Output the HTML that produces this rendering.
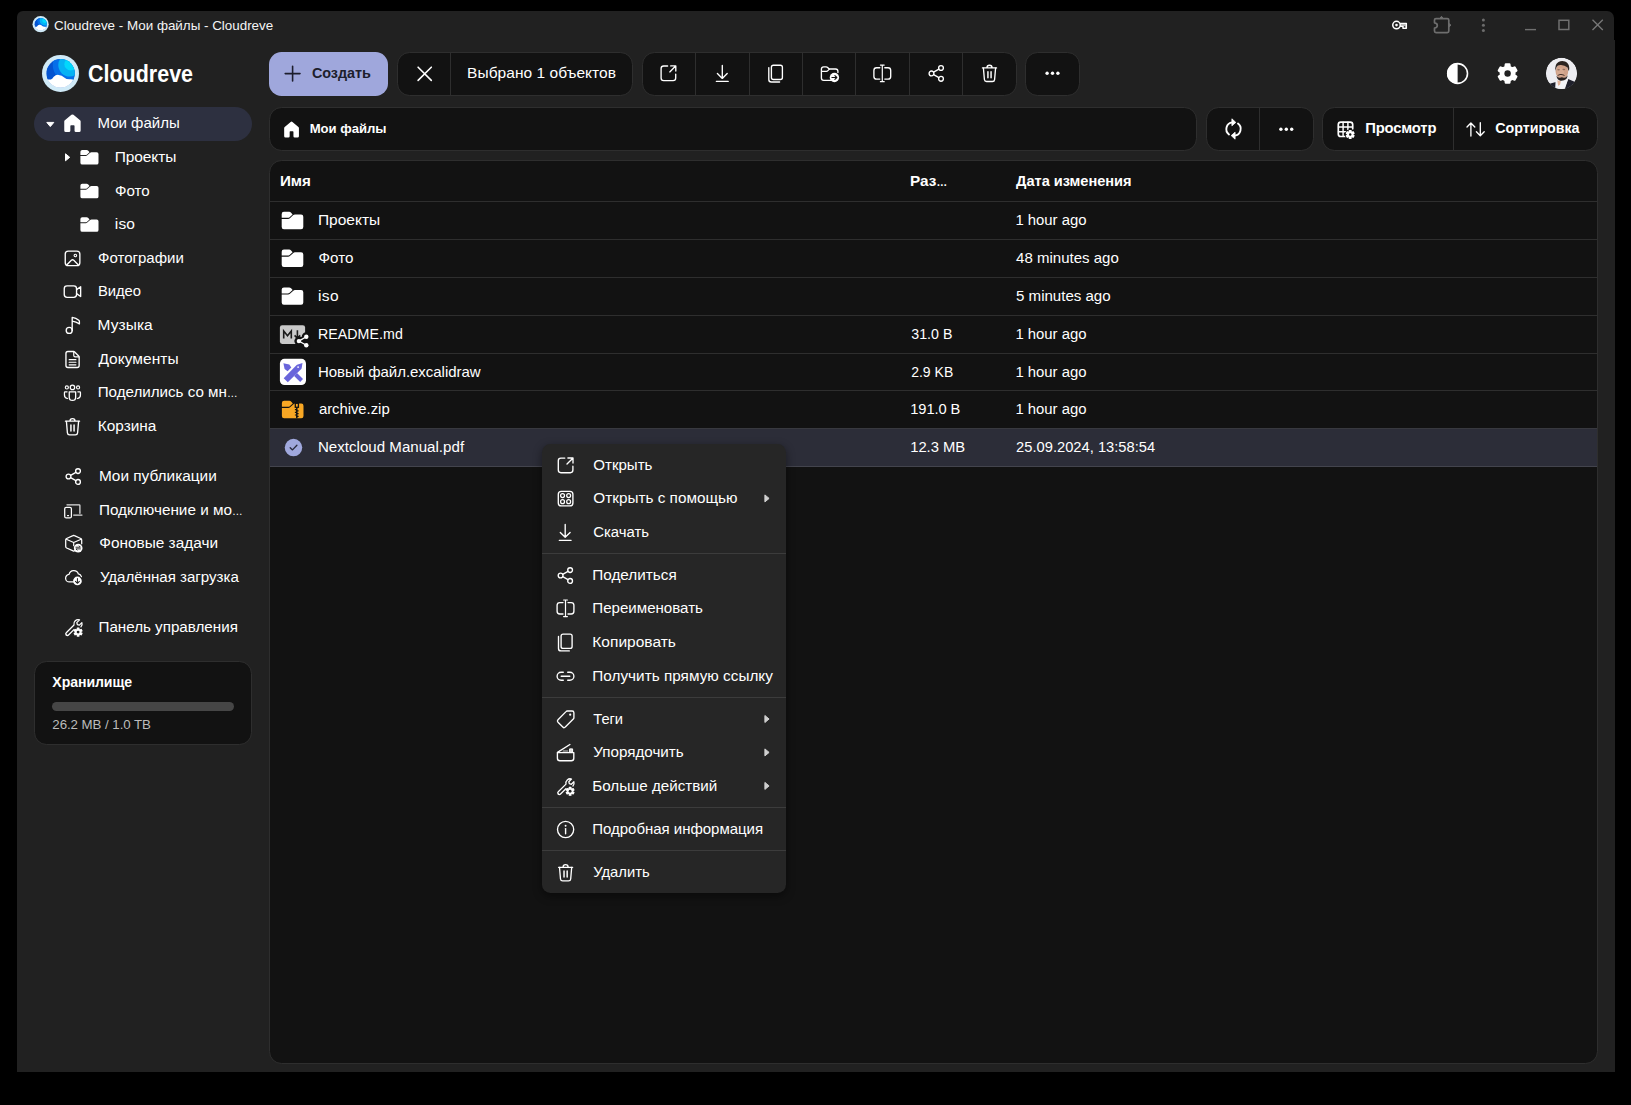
<!DOCTYPE html>
<html lang="ru">
<head>
<meta charset="utf-8">
<title>Cloudreve - Мои файлы - Cloudreve</title>
<style>
*{box-sizing:border-box;margin:0;padding:0}
html,body{width:1631px;height:1105px;background:#000;overflow:hidden}
body{font-family:"Liberation Sans",sans-serif;color:#fff;font-size:14.7px;position:relative}
.abs{position:absolute}
svg{display:block;overflow:visible}
#win{position:absolute;left:17px;top:40px;width:1598px;height:1032px;background:#212121}
#tbar{position:absolute;left:17px;top:10.5px;width:1597px;height:31px;background:#212121;border-radius:6px 7px 0 0}
.panel{position:absolute;background:#121212;border:1px solid #2e2e2e;border-radius:12.5px}
.vdiv{position:absolute;top:0;width:1px;height:100%;background:#2e2e2e}
.row{position:absolute;left:270px;width:1327px;height:1px;background:#2e2e2e}
.t{position:absolute;line-height:20px;white-space:nowrap}
.mdiv{position:absolute;left:542px;width:244px;height:1px;background:#3c3c3c}
</style>
</head>
<body>
<div id="tbar"></div>
<div id="win"></div>

<div id="sidebar">
<div class="abs" style="left:34px;top:107px;width:218px;height:34px;border-radius:17px;background:#2d3040"></div>
<div class="panel" style="left:34px;top:661px;width:218px;height:84px"></div>
<div class="abs" style="left:52px;top:702px;width:182px;height:9px;border-radius:4.5px;background:#464646"></div>
</div>

<div id="toolbar">
<div class="abs" style="left:269px;top:52px;width:119px;height:44px;border-radius:12.5px;background:#9fa7dc"></div>
<div class="panel" style="left:397px;top:52px;width:236px;height:44px"><div class="vdiv" style="left:52px"></div></div>
<div class="panel" style="left:642px;top:52px;width:375px;height:44px">
<div class="vdiv" style="left:52px"></div><div class="vdiv" style="left:106px"></div><div class="vdiv" style="left:159px"></div><div class="vdiv" style="left:212px"></div><div class="vdiv" style="left:266px"></div><div class="vdiv" style="left:319px"></div>
</div>
<div class="panel" style="left:1025px;top:52px;width:55px;height:44px"></div>
<div class="panel" style="left:269px;top:107px;width:928px;height:44px"></div>
<div class="panel" style="left:1206px;top:107px;width:108px;height:44px"><div class="vdiv" style="left:52px"></div></div>
<div class="panel" style="left:1322px;top:107px;width:276px;height:44px"><div class="vdiv" style="left:130px"></div></div>
</div>

<div id="table">
<div class="panel" style="left:269px;top:160px;width:1329px;height:903.5px"></div>
<div class="abs" style="left:270px;top:428px;width:1327px;height:38.5px;background:#2c2d38"></div>
<div class="row" style="top:201px"></div>
<div class="row" style="top:239.3px"></div>
<div class="row" style="top:277.1px"></div>
<div class="row" style="top:314.9px"></div>
<div class="row" style="top:352.7px"></div>
<div class="row" style="top:390px"></div>
<div class="row" style="top:428px;background:#38393f"></div>
<div class="row" style="top:466px;background:#43444d"></div>
</div>

<div id="menu">
<div class="abs" style="left:542px;top:444px;width:244px;height:449px;border-radius:8.5px;background:#262626;box-shadow:0 3px 10px rgba(0,0,0,.45)"></div>
<div class="mdiv" style="top:553px"></div>
<div class="mdiv" style="top:697px"></div>
<div class="mdiv" style="top:807px"></div>
<div class="mdiv" style="top:850px"></div>
</div>

<div id="texts">
<div class="t" style="left:88px;top:59.6px;font-size:23px;line-height:28px;font-weight:bold;transform-origin:0 50%;transform:scaleX(.934)">Cloudreve</div>
<div class="t" style="left:54px;top:16px;font-size:13.4px;color:#f4f4f4">Cloudreve - Мои файлы - Cloudreve</div>
<div class="t" style="left:97.6px;top:113px;font-size:15px;letter-spacing:-0.01px">Мои файлы</div>
<div class="t" style="left:114.8px;top:147px;font-size:15.5px;letter-spacing:-0.11px">Проекты</div>
<div class="t" style="left:115px;top:181px;font-size:15.1px;letter-spacing:-0.03px">Фото</div>
<div class="t" style="left:114.8px;top:214px;font-size:15.5px;letter-spacing:0.15px">iso</div>
<div class="t" style="left:98px;top:248px;font-size:15px;letter-spacing:0.01px">Фотографии</div>
<div class="t" style="left:97.9px;top:281px;font-size:14.8px;letter-spacing:-0.02px">Видео</div>
<div class="t" style="left:97.6px;top:315px;font-size:15.5px;letter-spacing:0.06px">Музыка</div>
<div class="t" style="left:98.4px;top:349px;font-size:15.5px;letter-spacing:0.04px">Документы</div>
<div class="t" style="left:97.7px;top:382px;font-size:15.2px;letter-spacing:-0.02px">Поделились со мн<span style="font-size:10.64px;letter-spacing:0">…</span></div>
<div class="t" style="left:97.7px;top:416px;font-size:15.4px;letter-spacing:0.02px">Корзина</div>
<div class="t" style="left:98.9px;top:466px;font-size:15.4px;letter-spacing:-0.01px">Мои публикации</div>
<div class="t" style="left:98.9px;top:500px;font-size:15.3px">Подключение и мо<span style="font-size:10.71px;letter-spacing:0">…</span></div>
<div class="t" style="left:99.3px;top:533px;font-size:15.4px;letter-spacing:-0.01px">Фоновые задачи</div>
<div class="t" style="left:99.9px;top:567px;font-size:15.1px;letter-spacing:-0.01px">Удалённая загрузка</div>
<div class="t" style="left:98.5px;top:617px;font-size:15.2px;letter-spacing:-0.01px">Панель управления</div>
<div class="t" style="left:52.3px;top:672px;font-size:14.1px;letter-spacing:-0.07px;font-weight:700">Хранилище</div>
<div class="t" style="left:52.3px;top:715px;font-size:13.3px;letter-spacing:-0.06px;color:#bcbcbc">26.2 MB / 1.0 TB</div>
<div class="t" style="left:312px;top:63px;font-size:14.4px;letter-spacing:-0.06px;font-weight:700;color:#1d1e2d">Создать</div>
<div class="t" style="left:467.1px;top:63px;font-size:15.5px;letter-spacing:0.05px">Выбрано 1 объектов</div>
<div class="t" style="left:309.7px;top:119px;font-size:13.1px;letter-spacing:-0.02px;font-weight:700">Мои файлы</div>
<div class="t" style="left:1365.2px;top:118px;font-size:14.8px;letter-spacing:-0.17px;font-weight:700">Просмотр</div>
<div class="t" style="left:1495.3px;top:118px;font-size:14.3px;letter-spacing:-0.06px;font-weight:700">Сортировка</div>
<div class="t" style="left:279.9px;top:171px;font-size:15.2px;letter-spacing:-0.03px;font-weight:700">Имя</div>
<div class="t" style="left:910px;top:171px;font-size:15.3px;letter-spacing:0.03px;font-weight:700">Раз<span style="font-size:10.71px;letter-spacing:0">…</span></div>
<div class="t" style="left:1016.1px;top:171px;font-size:14.6px;letter-spacing:-0.03px;font-weight:700">Дата изменения</div>
<div class="t" style="left:317.9px;top:210px;font-size:15.5px;letter-spacing:0.02px">Проекты</div>
<div class="t" style="left:1015.4px;top:210px;font-size:14.9px;letter-spacing:-0.01px">1 hour ago</div>
<div class="t" style="left:318.5px;top:248px;font-size:15.2px;letter-spacing:-0.01px">Фото</div>
<div class="t" style="left:1016.1px;top:248px;font-size:15px;letter-spacing:0.01px">48 minutes ago</div>
<div class="t" style="left:317.9px;top:286px;font-size:15.5px;letter-spacing:0.4px">iso</div>
<div class="t" style="left:1016.1px;top:286px;font-size:15.1px;letter-spacing:-0.03px">5 minutes ago</div>
<div class="t" style="left:317.9px;top:324px;font-size:14.2px;letter-spacing:0.07px">README.md</div>
<div class="t" style="left:911.2px;top:324px;font-size:14.2px;letter-spacing:0.05px">31.0 B</div>
<div class="t" style="left:1015.4px;top:324px;font-size:14.9px;letter-spacing:-0.01px">1 hour ago</div>
<div class="t" style="left:317.9px;top:362px;font-size:15px;letter-spacing:-0.03px">Новый файл.excalidraw</div>
<div class="t" style="left:911.2px;top:362px;font-size:14px">2.9 KB</div>
<div class="t" style="left:1015.4px;top:362px;font-size:14.9px;letter-spacing:-0.01px">1 hour ago</div>
<div class="t" style="left:318.9px;top:399px;font-size:14.9px;letter-spacing:-0.04px">archive.zip</div>
<div class="t" style="left:910.2px;top:399px;font-size:14.7px;letter-spacing:-0.07px">191.0 B</div>
<div class="t" style="left:1015.4px;top:399px;font-size:14.9px;letter-spacing:-0.01px">1 hour ago</div>
<div class="t" style="left:317.9px;top:437px;font-size:15.1px;letter-spacing:0.01px">Nextcloud Manual.pdf</div>
<div class="t" style="left:910.2px;top:437px;font-size:14.8px;letter-spacing:-0.04px">12.3 MB</div>
<div class="t" style="left:1016.1px;top:437px;font-size:14.7px;letter-spacing:0.01px">25.09.2024, 13:58:54</div>
<div class="t" style="left:593.3px;top:455px;font-size:15.1px;letter-spacing:-0.02px">Открыть</div>
<div class="t" style="left:593.3px;top:488px;font-size:15.3px;letter-spacing:0.01px">Открыть с помощью</div>
<div class="t" style="left:593.3px;top:522px;font-size:14.9px;letter-spacing:-0.03px">Скачать</div>
<div class="t" style="left:592.3px;top:565px;font-size:15.3px;letter-spacing:-0.01px">Поделиться</div>
<div class="t" style="left:592.3px;top:598px;font-size:15.1px">Переименовать</div>
<div class="t" style="left:592.3px;top:632px;font-size:15.5px;letter-spacing:0.02px">Копировать</div>
<div class="t" style="left:592.3px;top:666px;font-size:15.3px;letter-spacing:0.02px">Получить прямую ссылку</div>
<div class="t" style="left:593.3px;top:709px;font-size:14.7px;letter-spacing:-0.06px">Теги</div>
<div class="t" style="left:593.3px;top:742px;font-size:15.2px">Упорядочить</div>
<div class="t" style="left:592.3px;top:776px;font-size:15.2px;letter-spacing:-0.01px">Больше действий</div>
<div class="t" style="left:592.3px;top:819px;font-size:15px;letter-spacing:-0.02px">Подробная информация</div>
<div class="t" style="left:593.3px;top:862px;font-size:14.8px;letter-spacing:-0.03px">Удалить</div>
</div>
<svg class="abs" style="left:0;top:0" width="1631" height="1105" viewBox="0 0 1631 1105"><g transform="translate(50.3 124.5)"><path fill="#fff" stroke="#fff" stroke-width="1" stroke-linejoin="round" d="M-3.5-2.1H3.5L0 2.1Z"/></g>
<g transform="translate(72.45 123.3) scale(1)"><path fill="#fff" d="M0-8.9Q.5-8.9 1-8.5L7.6-3Q8.2-2.5 8.2-1.7V7.3Q8.2 8.8 6.7 8.8H3.5Q2.1 8.8 2.1 7.4V2.6Q2.1 1.9 1.4 1.9H-1.4Q-2.1 1.9-2.1 2.6V7.4Q-2.1 8.8-3.5 8.8H-6.7Q-8.2 8.8-8.2 7.3V-1.7Q-8.2-2.5-7.6-3L-1-8.5Q-.5-8.9 0-8.9Z"/></g>
<g transform="translate(67.6 157.3)"><path fill="#fff" stroke="#fff" stroke-width="1" stroke-linejoin="round" d="M-2.1-3.5V3.5L2.1 0Z"/></g>
<g transform="translate(80.4 150.00972222222222) scale(0.837962962962963)"><path fill="#fff" d="M0 2.2Q0 0 2.2 0H7.4Q8.6 0 9.4 .9L10.9 2.6 7.6 5.6Q7 6 6.2 6H0ZM0 7.1H6.4Q7.4 7.1 8.2 6.4L11.6 3.3Q12.3 2.7 13.2 2.7H19.4Q21.6 2.7 21.6 4.9V15.2Q21.6 17.4 19.4 17.4H2.2Q0 17.4 0 15.2Z"/></g>
<g transform="translate(80.4 183.7097222222222) scale(0.837962962962963)"><path fill="#fff" d="M0 2.2Q0 0 2.2 0H7.4Q8.6 0 9.4 .9L10.9 2.6 7.6 5.6Q7 6 6.2 6H0ZM0 7.1H6.4Q7.4 7.1 8.2 6.4L11.6 3.3Q12.3 2.7 13.2 2.7H19.4Q21.6 2.7 21.6 4.9V15.2Q21.6 17.4 19.4 17.4H2.2Q0 17.4 0 15.2Z"/></g>
<g transform="translate(80.4 217.2097222222222) scale(0.837962962962963)"><path fill="#fff" d="M0 2.2Q0 0 2.2 0H7.4Q8.6 0 9.4 .9L10.9 2.6 7.6 5.6Q7 6 6.2 6H0ZM0 7.1H6.4Q7.4 7.1 8.2 6.4L11.6 3.3Q12.3 2.7 13.2 2.7H19.4Q21.6 2.7 21.6 4.9V15.2Q21.6 17.4 19.4 17.4H2.2Q0 17.4 0 15.2Z"/></g>
<g transform="translate(72.55 258.4)"><rect x="-7.3" y="-7.3" width="14.6" height="14.6" rx="3" fill="none" stroke="#fff" stroke-width="1.35" stroke-linecap="round" stroke-linejoin="round"/><circle cx="2.8" cy="-2.9" r="1.25" fill="none" stroke="#fff" stroke-width="1.1" stroke-linecap="round" stroke-linejoin="round"/><path d="M-5.6 6.3L-1.2 1.8Q0 .8 1.2 1.8L5.6 6.3" fill="none" stroke="#fff" stroke-width="1.35" stroke-linecap="round" stroke-linejoin="round"/></g>
<g transform="translate(72.45 291.6)"><rect x="-8.2" y="-5.7" width="12.3" height="11.4" rx="2.8" fill="none" stroke="#fff" stroke-width="1.35" stroke-linecap="round" stroke-linejoin="round"/><path d="M4.1-2L8.2-4.9V4.9L4.1 2" fill="none" stroke="#fff" stroke-width="1.35" stroke-linecap="round" stroke-linejoin="round"/></g>
<g transform="translate(72.6 325.5)"><circle cx="-3.4" cy="4.9" r="3" fill="none" stroke="#fff" stroke-width="1.35" stroke-linecap="round" stroke-linejoin="round"/><path d="M-.4 4.9V-8.1Q3.5-7.6 6.2-5.3Q6.8-4.8 6.8-4V-1.6Q3.5-3.8-.4-4.3" fill="none" stroke="#fff" stroke-width="1.35" stroke-linecap="round" stroke-linejoin="round"/></g>
<g transform="translate(72.55 359.45)"><path d="M1-8H-4.6Q-6.6-8-6.6-6V6Q-6.6 8-4.6 8H4.6Q6.6 8 6.6 6V-2.4Q6.6-3 6.1-3.5L2.1-7.5Q1.6-8 1-8Z" fill="none" stroke="#fff" stroke-width="1.35" stroke-linecap="round" stroke-linejoin="round"/><path d="M1.2-7.6V-4Q1.2-2.6 2.6-2.6H6.3" fill="none" stroke="#fff" stroke-width="1.2" stroke-linecap="round" stroke-linejoin="round"/><path d="M-3.4.2H3.4M-3.4 2.8H3.4M-3.4 5.4H3.4" fill="none" stroke="#fff" stroke-width="1.1" stroke-linecap="round" stroke-linejoin="round"/></g>
<g transform="translate(72.45 392.7)"><circle cx="0" cy="-5.3" r="2.2" fill="none" stroke="#fff" stroke-width="1.25" stroke-linecap="round" stroke-linejoin="round"/><circle cx="-5.6" cy="-5.3" r="1.55" fill="none" stroke="#fff" stroke-width="1.15" stroke-linecap="round" stroke-linejoin="round"/><circle cx="5.6" cy="-5.3" r="1.55" fill="none" stroke="#fff" stroke-width="1.15" stroke-linecap="round" stroke-linejoin="round"/><path d="M-3.2-.9H3.2V4.5A3.2 3.2 0 0 1-3.2 4.5Z" fill="none" stroke="#fff" stroke-width="1.3" stroke-linecap="round" stroke-linejoin="round"/><path d="M-5.4-.9H-7.4Q-8-.9-8-.3V2.4A3.4 3.4 0 0 0-4.9 5.8" fill="none" stroke="#fff" stroke-width="1.25" stroke-linecap="round" stroke-linejoin="round"/><path d="M5.4-.9H7.4Q8-.9 8-.3V2.4A3.4 3.4 0 0 1 4.9 5.8" fill="none" stroke="#fff" stroke-width="1.25" stroke-linecap="round" stroke-linejoin="round"/></g>
<g transform="translate(72.5 426.3) scale(0.98)"><path d="M-7.2-5.2H7.2M-2.6-5.3A2.6 2.6 0 0 1 2.6-5.3" fill="none" stroke="#fff" stroke-width="1.35" stroke-linecap="round" stroke-linejoin="round"/><path d="M-6.2-5L-5.2 6.7Q-5 8.7-3 8.7H3Q5 8.7 5.2 6.7L6.2-5" fill="none" stroke="#fff" stroke-width="1.35" stroke-linecap="round" stroke-linejoin="round"/><path d="M-1.6-1.4V4.8M1.6-1.4V4.8" fill="none" stroke="#fff" stroke-width="1.5" stroke-linecap="round" stroke-linejoin="round"/></g>
<g transform="translate(73.2 476.5) scale(1)"><circle cx="4.8" cy="-5.4" r="2.4" fill="none" stroke="#fff" stroke-width="1.35" stroke-linecap="round" stroke-linejoin="round"/><circle cx="-4.7" cy="0" r="2.4" fill="none" stroke="#fff" stroke-width="1.35" stroke-linecap="round" stroke-linejoin="round"/><circle cx="4.8" cy="5.4" r="2.4" fill="none" stroke="#fff" stroke-width="1.35" stroke-linecap="round" stroke-linejoin="round"/><path d="M-2.6-1.2L2.7-4.2M-2.6 1.2L2.7 4.2" fill="none" stroke="#fff" stroke-width="1.35" stroke-linecap="round" stroke-linejoin="round"/></g>
<g transform="translate(72.9 510.7)"><rect x="-8.2" y="-3.4" width="6.7" height="10.6" rx="1.5" fill="none" stroke="#fff" stroke-width="1.25" stroke-linecap="round" stroke-linejoin="round"/><path d="M-5.4 4.9H-4.3" fill="none" stroke="#fff" stroke-width="1.1" stroke-linecap="round" stroke-linejoin="round"/><path d="M-5.9-5.9H6.4Q7-5.9 7-5.3V2.6" fill="none" stroke="#ddd" stroke-width="1.3" stroke-linecap="round" stroke-linejoin="round"/><path d="M.8 4.4H9" fill="none" stroke="#ddd" stroke-width="1.4" stroke-linecap="round" stroke-linejoin="round"/></g>
<g transform="translate(73.7 543.4) scale(0.93)"><path d="M2.6 7.2L.6 8.1Q0 8.4-.6 8.1L-7.6 4.9Q-8.6 4.4-8.6 3.3V-3.7Q-8.6-4.8-7.6-5.3L-.8-8.3Q0-8.7.8-8.3L7.6-5.3Q8.6-4.8 8.6-3.7V.4" fill="none" stroke="#fff" stroke-width="1.35" stroke-linecap="round" stroke-linejoin="round"/><path d="M-8-4.5L0-1L8-4.5M0-1V2.5" fill="none" stroke="#fff" stroke-width="1.25" stroke-linecap="round" stroke-linejoin="round"/><circle cx="4.8" cy="5" r="4.7" fill="#fff"/><path d="M2.4 4.1H7.2L5.9 2.8M7.2 5.9H2.4L3.7 7.2" fill="none" stroke="#212121" stroke-width="1" stroke-linecap="round" stroke-linejoin="round"/></g>
<g transform="translate(73.7 577.9) scale(0.93)"><path d="M-.6 4.3H-4.4A4 4 0 0 1-5-3.7A5.2 5.2 0 0 1 5-4.2A4.2 4.2 0 0 1 8.3-1.4" fill="none" stroke="#fff" stroke-width="1.35" stroke-linecap="round" stroke-linejoin="round"/><circle cx="4" cy="3.3" r="4.7" fill="#fff"/><path d="M4 .7V5.6M1.9 3.7L4 5.8L6.1 3.7" fill="none" stroke="#212121" stroke-width="1.1" stroke-linecap="round" stroke-linejoin="round"/></g>
<g transform="translate(73.7 627.8) scale(0.94)"><path d="M-7.9 7.6A1.7 1.7 0 0 1-7.9 5.2L.3-3A4.6 4.6 0 0 1 6.2-8.4L3.3-5.5L3.9-3.4L6-2.8L8.7-5.5A4.6 4.6 0 0 1 7.7-1" fill="none" stroke="#fff" stroke-width="1.35" stroke-linecap="round" stroke-linejoin="round"/><path d="M-7.9 7.6A1.7 1.7 0 0 0-5.5 7.6L.2 1.9" fill="none" stroke="#fff" stroke-width="1.35" stroke-linecap="round" stroke-linejoin="round"/><path fill="#fff" stroke="#fff" stroke-width="1.3" stroke-linejoin="round" transform="translate(4.7 4.6)" d="M-0.9 -2.76L-0.89 -4.21L0.89 -4.21L0.9 -2.76L1.94 -2.16L3.2 -2.88L4.09 -1.33L2.84 -0.6L2.84 0.6L4.09 1.33L3.2 2.88L1.94 2.16L0.9 2.76L0.89 4.21L-0.89 4.21L-0.9 2.76L-1.94 2.16L-3.2 2.88L-4.09 1.33L-2.84 0.6L-2.84 -0.6L-4.09 -1.33L-3.2 -2.88L-1.94 -2.16Z"/><circle cx="4.7" cy="4.6" r="1.5" fill="#212121"/></g>
<g transform="translate(292.6 73.6)"><path d="M-7.4 0H7.4M0-7.4V7.4" fill="none" stroke="#1d1e2d" stroke-width="1.6" stroke-linecap="round" stroke-linejoin="round"/></g>
<g transform="translate(424.7 73.8)"><path d="M-6.6 -6.6L6.6 6.6M6.6 -6.6L-6.6 6.6" fill="none" stroke="#fff" stroke-width="1.6" stroke-linecap="round" stroke-linejoin="round"/></g>
<g transform="translate(668.4 73.3)"><path d="M-.8-7.3H-4.7Q-7.3-7.3-7.3-4.7V4.7Q-7.3 7.3-4.7 7.3H4.7Q7.3 7.3 7.3 4.7V.8" fill="none" stroke="#fff" stroke-width="1.35" stroke-linecap="round" stroke-linejoin="round"/><path d="M2.3-7.4H7.4V-2.3M7.2-7.2L1.4-1.4" fill="none" stroke="#fff" stroke-width="1.35" stroke-linecap="round" stroke-linejoin="round"/></g>
<g transform="translate(722.3 73.1)"><path d="M0-7.6V5.2M-4.9.4L0 5.3L4.9.4M-5.9 8.3H5.9" fill="none" stroke="#fff" stroke-width="1.35" stroke-linecap="round" stroke-linejoin="round"/></g>
<g transform="translate(775.9 73.5)"><rect x="-4.5" y="-8.3" width="11" height="14.3" rx="2" fill="none" stroke="#fff" stroke-width="1.35" stroke-linecap="round" stroke-linejoin="round"/><path d="M-7.1-5.9V6Q-7.1 8.5-4.6 8.5H3.7" fill="none" stroke="#fff" stroke-width="1.35" stroke-linecap="round" stroke-linejoin="round"/></g>
<g transform="translate(829.4 73.6)"><path d="M1.5 6.8H-5.7Q-8 6.8-8 4.5V-4.5Q-8-6.8-5.7-6.8H-3.3Q-2.4-6.8-1.8-6.2L-.2-4.6H6.2Q8.5-4.6 8.5-2.3V-1" fill="none" stroke="#fff" stroke-width="1.35" stroke-linecap="round" stroke-linejoin="round"/><path d="M-7.8-2.2H-3Q-2.1-2.2-1.5-2.9L0-4.5" fill="none" stroke="#fff" stroke-width="1.2" stroke-linecap="round" stroke-linejoin="round"/><circle cx="5" cy="3.9" r="4.7" fill="#fff"/><path d="M2.5 3.9H7.3M5.5 2L7.4 3.9L5.5 5.8" fill="none" stroke="#121212" stroke-width="1.1" stroke-linecap="round" stroke-linejoin="round"/></g>
<g transform="translate(882.3 73.4)"><path d="M-2.5-5.7H-5.7Q-8.4-5.7-8.4-3V3Q-8.4 5.7-5.7 5.7H-2.5M2.5-5.7H5.7Q8.4-5.7 8.4-3V3Q8.4 5.7 5.7 5.7H2.5" fill="none" stroke="#fff" stroke-width="1.35" stroke-linecap="round" stroke-linejoin="round"/><path d="M0-8.2V8.2M-1.9-8.3H1.9M-1.9 8.3H1.9" fill="none" stroke="#fff" stroke-width="1.2" stroke-linecap="round" stroke-linejoin="round"/></g>
<g transform="translate(936.2 73.4) scale(1)"><circle cx="4.8" cy="-5.4" r="2.4" fill="none" stroke="#fff" stroke-width="1.35" stroke-linecap="round" stroke-linejoin="round"/><circle cx="-4.7" cy="0" r="2.4" fill="none" stroke="#fff" stroke-width="1.35" stroke-linecap="round" stroke-linejoin="round"/><circle cx="4.8" cy="5.4" r="2.4" fill="none" stroke="#fff" stroke-width="1.35" stroke-linecap="round" stroke-linejoin="round"/><path d="M-2.6-1.2L2.7-4.2M-2.6 1.2L2.7 4.2" fill="none" stroke="#fff" stroke-width="1.35" stroke-linecap="round" stroke-linejoin="round"/></g>
<g transform="translate(989.5 73) scale(0.98)"><path d="M-7.2-5.2H7.2M-2.6-5.3A2.6 2.6 0 0 1 2.6-5.3" fill="none" stroke="#fff" stroke-width="1.35" stroke-linecap="round" stroke-linejoin="round"/><path d="M-6.2-5L-5.2 6.7Q-5 8.7-3 8.7H3Q5 8.7 5.2 6.7L6.2-5" fill="none" stroke="#fff" stroke-width="1.35" stroke-linecap="round" stroke-linejoin="round"/><path d="M-1.6-1.4V4.8M1.6-1.4V4.8" fill="none" stroke="#fff" stroke-width="1.5" stroke-linecap="round" stroke-linejoin="round"/></g>
<g transform="translate(1052.5 73.3)"><circle cx="-5.4" cy="0" r="1.7" fill="#fff"/><circle cx="0" cy="0" r="1.7" fill="#fff"/><circle cx="5.4" cy="0" r="1.7" fill="#fff"/></g>
<g transform="translate(1233.5 129)"><path d="M-4.5 5.4A6.7 6.7 0 0 1-1.2-6.6M4.5-5.4A6.7 6.7 0 0 1 1.2 6.6" fill="none" stroke="#fff" stroke-width="1.9" stroke-linecap="round" stroke-linejoin="round"/><path fill="#fff" stroke="#fff" stroke-width=".8" stroke-linejoin="round" d="M-1.6-10.2L2.3-6.6L-1.6-3.2ZM1.6 10.2L-2.3 6.6L1.6 3.2Z"/></g>
<g transform="translate(1286.3 129.2)"><circle cx="-5.4" cy="0" r="1.7" fill="#fff"/><circle cx="0" cy="0" r="1.7" fill="#fff"/><circle cx="5.4" cy="0" r="1.7" fill="#fff"/></g>
<g transform="translate(1345.5 129.3)"><path d="M-.5 7.2H-4.7Q-7.2 7.2-7.2 4.7V-4.7Q-7.2-7.2-4.7-7.2H4.7Q7.2-7.2 7.2-4.7V-.5" fill="none" stroke="#fff" stroke-width="1.7" stroke-linecap="round" stroke-linejoin="round"/><path d="M-7-2.4H7M-7 2.4H.5M-2.4-7V7M2.4-7V.5" fill="none" stroke="#fff" stroke-width="1.45" stroke-linecap="round" stroke-linejoin="round"/><circle cx="4.7" cy="5.2" r="5.3" fill="#121212"/><path fill="#fff" stroke="#fff" stroke-width="1.5" stroke-linejoin="round" transform="translate(4.7 5.2)" d="M-0.8 -2.47L-0.81 -3.81L0.81 -3.81L0.8 -2.47L1.74 -1.93L2.9 -2.61L3.71 -1.21L2.54 -0.54L2.54 0.54L3.71 1.21L2.9 2.61L1.74 1.93L0.8 2.47L0.81 3.81L-0.81 3.81L-0.8 2.47L-1.74 1.93L-2.9 2.61L-3.71 1.21L-2.54 0.54L-2.54 -0.54L-3.71 -1.21L-2.9 -2.61L-1.74 -1.93Z"/><circle cx="4.7" cy="5.2" r="1.2" fill="#121212"/></g>
<g transform="translate(1475.6 129.4)"><path d="M-4.7 6.6V-6.2M-8.6-2.4L-4.7-6.4L-.8-2.4M4.7-6.6V6.2M.8 2.4L4.7 6.4L8.6 2.4" fill="none" stroke="#fff" stroke-width="1.35" stroke-linecap="round" stroke-linejoin="round"/></g>
<g transform="translate(291.55 129.6) scale(0.9)"><path fill="#fff" d="M0-8.9Q.5-8.9 1-8.5L7.6-3Q8.2-2.5 8.2-1.7V7.3Q8.2 8.8 6.7 8.8H3.5Q2.1 8.8 2.1 7.4V2.6Q2.1 1.9 1.4 1.9H-1.4Q-2.1 1.9-2.1 2.6V7.4Q-2.1 8.8-3.5 8.8H-6.7Q-8.2 8.8-8.2 7.3V-1.7Q-8.2-2.5-7.6-3L-1-8.5Q-.5-8.9 0-8.9Z"/></g>
<g transform="translate(281.7 211.8) scale(1)"><path fill="#fff" d="M0 2.2Q0 0 2.2 0H7.4Q8.6 0 9.4 .9L10.9 2.6 7.6 5.6Q7 6 6.2 6H0ZM0 7.1H6.4Q7.4 7.1 8.2 6.4L11.6 3.3Q12.3 2.7 13.2 2.7H19.4Q21.6 2.7 21.6 4.9V15.2Q21.6 17.4 19.4 17.4H2.2Q0 17.4 0 15.2Z"/></g>
<g transform="translate(281.7 249.60000000000002) scale(1)"><path fill="#fff" d="M0 2.2Q0 0 2.2 0H7.4Q8.6 0 9.4 .9L10.9 2.6 7.6 5.6Q7 6 6.2 6H0ZM0 7.1H6.4Q7.4 7.1 8.2 6.4L11.6 3.3Q12.3 2.7 13.2 2.7H19.4Q21.6 2.7 21.6 4.9V15.2Q21.6 17.4 19.4 17.4H2.2Q0 17.4 0 15.2Z"/></g>
<g transform="translate(281.7 287.40000000000003) scale(1)"><path fill="#fff" d="M0 2.2Q0 0 2.2 0H7.4Q8.6 0 9.4 .9L10.9 2.6 7.6 5.6Q7 6 6.2 6H0ZM0 7.1H6.4Q7.4 7.1 8.2 6.4L11.6 3.3Q12.3 2.7 13.2 2.7H19.4Q21.6 2.7 21.6 4.9V15.2Q21.6 17.4 19.4 17.4H2.2Q0 17.4 0 15.2Z"/></g>
<g transform="translate(565.6 465.4)"><path d="M-.8-7.3H-4.7Q-7.3-7.3-7.3-4.7V4.7Q-7.3 7.3-4.7 7.3H4.7Q7.3 7.3 7.3 4.7V.8" fill="none" stroke="#fff" stroke-width="1.35" stroke-linecap="round" stroke-linejoin="round"/><path d="M2.3-7.4H7.4V-2.3M7.2-7.2L1.4-1.4" fill="none" stroke="#fff" stroke-width="1.35" stroke-linecap="round" stroke-linejoin="round"/></g>
<g transform="translate(565.6 498.6)"><rect x="-7.3" y="-7.3" width="14.6" height="14.6" rx="3" fill="none" stroke="#fff" stroke-width="1.35" stroke-linecap="round" stroke-linejoin="round"/><circle cx="-3.05" cy="-3.05" r="1.95" fill="none" stroke="#fff" stroke-width="1.25" stroke-linecap="round" stroke-linejoin="round"/><circle cx="-3.05" cy="3.05" r="1.95" fill="none" stroke="#fff" stroke-width="1.25" stroke-linecap="round" stroke-linejoin="round"/><circle cx="3.05" cy="-3.05" r="1.95" fill="none" stroke="#fff" stroke-width="1.25" stroke-linecap="round" stroke-linejoin="round"/><circle cx="3.05" cy="3.05" r="1.95" fill="none" stroke="#fff" stroke-width="1.25" stroke-linecap="round" stroke-linejoin="round"/></g>
<g transform="translate(565.2 532)"><path d="M0-7.6V5.2M-4.9.4L0 5.3L4.9.4M-5.9 8.3H5.9" fill="none" stroke="#fff" stroke-width="1.35" stroke-linecap="round" stroke-linejoin="round"/></g>
<g transform="translate(565.3 575.5) scale(1)"><circle cx="4.8" cy="-5.4" r="2.4" fill="none" stroke="#fff" stroke-width="1.35" stroke-linecap="round" stroke-linejoin="round"/><circle cx="-4.7" cy="0" r="2.4" fill="none" stroke="#fff" stroke-width="1.35" stroke-linecap="round" stroke-linejoin="round"/><circle cx="4.8" cy="5.4" r="2.4" fill="none" stroke="#fff" stroke-width="1.35" stroke-linecap="round" stroke-linejoin="round"/><path d="M-2.6-1.2L2.7-4.2M-2.6 1.2L2.7 4.2" fill="none" stroke="#fff" stroke-width="1.35" stroke-linecap="round" stroke-linejoin="round"/></g>
<g transform="translate(565.5 608.3)"><path d="M-2.5-5.7H-5.7Q-8.4-5.7-8.4-3V3Q-8.4 5.7-5.7 5.7H-2.5M2.5-5.7H5.7Q8.4-5.7 8.4-3V3Q8.4 5.7 5.7 5.7H2.5" fill="none" stroke="#fff" stroke-width="1.35" stroke-linecap="round" stroke-linejoin="round"/><path d="M0-8.2V8.2M-1.9-8.3H1.9M-1.9 8.3H1.9" fill="none" stroke="#fff" stroke-width="1.2" stroke-linecap="round" stroke-linejoin="round"/></g>
<g transform="translate(565.6 642.4)"><rect x="-4.5" y="-8.3" width="11" height="14.3" rx="2" fill="none" stroke="#fff" stroke-width="1.35" stroke-linecap="round" stroke-linejoin="round"/><path d="M-7.1-5.9V6Q-7.1 8.5-4.6 8.5H3.7" fill="none" stroke="#fff" stroke-width="1.35" stroke-linecap="round" stroke-linejoin="round"/></g>
<g transform="translate(565.5 676.3)"><path d="M-2.2-4H-4.4A4 4 0 0 0-4.4 4H-2.2M2.2-4H4.4A4 4 0 0 1 4.4 4H2.2M-4.3 0H4.3" fill="none" stroke="#fff" stroke-width="1.35" stroke-linecap="round" stroke-linejoin="round"/></g>
<g transform="translate(565.9 719)"><path d="M1.3-8H6.2Q8-8 8-6.2V-1.3Q8-.5 7.4.1L-.6 8.1Q-1.9 9.3-3.1 8.1L-7.9 3.3Q-9.1 2-7.9.8L.1-7.4Q.6-8 1.3-8Z" fill="none" stroke="#fff" stroke-width="1.35" stroke-linecap="round" stroke-linejoin="round"/><circle cx="4.3" cy="-4.3" r="1.1" fill="#fff"/></g>
<g transform="translate(565.6 752.6)"><path d="M-8.2 0H8.2V5.7Q8.2 8.2 5.7 8.2H-5.7Q-8.2 8.2-8.2 5.7Z" fill="none" stroke="#fff" stroke-width="1.35" stroke-linecap="round" stroke-linejoin="round"/><path d="M-8.1-.2L4.3-8.1" fill="none" stroke="#fff" stroke-width="1.35" stroke-linecap="round" stroke-linejoin="round"/><path d="M4-3.7H7V-.3H4Z" fill="#ddd" stroke="#fff" stroke-width="1" stroke-linejoin="round"/><path d="M-2.4-1.6H2.2" fill="none" stroke="#ccc" stroke-width="1.1" stroke-linecap="round" stroke-linejoin="round"/></g>
<g transform="translate(565.7 786.9) scale(0.94)"><path d="M-7.9 7.6A1.7 1.7 0 0 1-7.9 5.2L.3-3A4.6 4.6 0 0 1 6.2-8.4L3.3-5.5L3.9-3.4L6-2.8L8.7-5.5A4.6 4.6 0 0 1 7.7-1" fill="none" stroke="#fff" stroke-width="1.35" stroke-linecap="round" stroke-linejoin="round"/><path d="M-7.9 7.6A1.7 1.7 0 0 0-5.5 7.6L.2 1.9" fill="none" stroke="#fff" stroke-width="1.35" stroke-linecap="round" stroke-linejoin="round"/><path fill="#fff" stroke="#fff" stroke-width="1.3" stroke-linejoin="round" transform="translate(4.7 4.6)" d="M-0.9 -2.76L-0.89 -4.21L0.89 -4.21L0.9 -2.76L1.94 -2.16L3.2 -2.88L4.09 -1.33L2.84 -0.6L2.84 0.6L4.09 1.33L3.2 2.88L1.94 2.16L0.9 2.76L0.89 4.21L-0.89 4.21L-0.9 2.76L-1.94 2.16L-3.2 2.88L-4.09 1.33L-2.84 0.6L-2.84 -0.6L-4.09 -1.33L-3.2 -2.88L-1.94 -2.16Z"/><circle cx="4.7" cy="4.6" r="1.5" fill="#262626"/></g>
<g transform="translate(565.6 829.5)"><circle r="8.1" fill="none" stroke="#fff" stroke-width="1.35" stroke-linecap="round" stroke-linejoin="round"/><path d="M0-.9V4.3" fill="none" stroke="#fff" stroke-width="1.4" stroke-linecap="round" stroke-linejoin="round"/><circle cx="0" cy="-3.7" r=".95" fill="#fff"/></g>
<g transform="translate(565.6 872.4) scale(0.98)"><path d="M-7.2-5.2H7.2M-2.6-5.3A2.6 2.6 0 0 1 2.6-5.3" fill="none" stroke="#fff" stroke-width="1.35" stroke-linecap="round" stroke-linejoin="round"/><path d="M-6.2-5L-5.2 6.7Q-5 8.7-3 8.7H3Q5 8.7 5.2 6.7L6.2-5" fill="none" stroke="#fff" stroke-width="1.35" stroke-linecap="round" stroke-linejoin="round"/><path d="M-1.6-1.4V4.8M1.6-1.4V4.8" fill="none" stroke="#fff" stroke-width="1.5" stroke-linecap="round" stroke-linejoin="round"/></g>
<g transform="translate(767 498.4)"><path fill="#cfcfcf" stroke="#cfcfcf" stroke-width="1" stroke-linejoin="round" d="M-2.1-3.5V3.5L2.1 0Z"/></g>
<g transform="translate(767 719)"><path fill="#cfcfcf" stroke="#cfcfcf" stroke-width="1" stroke-linejoin="round" d="M-2.1-3.5V3.5L2.1 0Z"/></g>
<g transform="translate(767 752.4)"><path fill="#cfcfcf" stroke="#cfcfcf" stroke-width="1" stroke-linejoin="round" d="M-2.1-3.5V3.5L2.1 0Z"/></g>
<g transform="translate(767 785.9)"><path fill="#cfcfcf" stroke="#cfcfcf" stroke-width="1" stroke-linejoin="round" d="M-2.1-3.5V3.5L2.1 0Z"/></g>
<g transform="translate(281.9 400.85) scale(1)"><path fill="#f8a724" d="M0 2.2Q0 0 2.2 0H7.4Q8.6 0 9.4 .9L10.9 2.6 7.6 5.6Q7 6 6.2 6H0ZM0 7.1H6.4Q7.4 7.1 8.2 6.4L11.6 3.3Q12.3 2.7 13.2 2.7H19.4Q21.6 2.7 21.6 4.9V15.2Q21.6 17.4 19.4 17.4H2.2Q0 17.4 0 15.2Z"/></g>
<g transform="translate(60.5 73.4)"><circle r="18.5" fill="#d0eaf7"/><clipPath id="ca"><circle r="14.3"/></clipPath><g clip-path="url(#ca)"><circle r="14.3" fill="#0453d0"/><circle cx="9.25" cy="-8.33" r="17.02" fill="#066fe9"/><circle cx="9.25" cy="-8.33" r="11.47" fill="#06b2f4"/><circle cx="10.18" cy="-9.25" r="6.29" fill="#02d8fc"/><path fill="#fff" d="M-18.5 6.11L-9.62 6.11Q-7.77 5.55 -7.03 3.7Q-4.62 1.11 -1.85 1.48Q1.48 1.85 3.7 4.07Q6.11 6.11 9.25 5.92Q11.47 5.55 13.88 6.66L18.5 7.4V18.5H-18.5Z"/></g></g>
<g transform="translate(40.6 24.2)"><circle r="8.1" fill="#d0eaf7"/><clipPath id="cb"><circle r="6.26"/></clipPath><g clip-path="url(#cb)"><circle r="6.26" fill="#0453d0"/><circle cx="4.05" cy="-3.65" r="7.45" fill="#066fe9"/><circle cx="4.05" cy="-3.65" r="5.02" fill="#06b2f4"/><circle cx="4.46" cy="-4.05" r="2.75" fill="#02d8fc"/><path fill="#fff" d="M-8.1 2.67L-4.21 2.67Q-3.4 2.43 -3.08 1.62Q-2.02 0.49 -0.81 0.65Q0.65 0.81 1.62 1.78Q2.67 2.67 4.05 2.59Q5.02 2.43 6.07 2.92L8.1 3.24V8.1H-8.1Z"/></g></g>
<g><path d="M1400 23.3H1406.4V28.3H1402.9V26.3H1400" fill="#b9b9b9" stroke="#fff" stroke-width="1.3" stroke-linejoin="round"/><rect x="1403.9" y="26.2" width="1.3" height="1.3" fill="#212121"/><circle cx="1396.5" cy="25.1" r="3.75" fill="#212121" stroke="#fff" stroke-width="1.5"/><circle cx="1396.5" cy="25.1" r="1.3" fill="#fff"/></g>
<path fill="none" stroke="#6e6e6e" stroke-width="1.7" stroke-linejoin="round" d="M1436 18.6H1447.3Q1448.8 18.6 1448.8 20.1V31.1Q1448.8 32.6 1447.3 32.6H1436Q1434.5 32.6 1434.5 31.1V28Q1437.3 27.6 1437.3 25.4Q1437.3 23.2 1434.5 22.8V20.1Q1434.5 18.6 1436 18.6Z"/>
<path fill="#6e6e6e" stroke="#6e6e6e" stroke-width="1" stroke-linejoin="round" d="M1439.9 18.4L1441.5 16.3L1443.1 18.4ZM1449 23.6L1451 25.2L1449 26.8Z"/>
<g fill="#6c6c6c"><circle cx="1483.4" cy="20" r="1.5"/><circle cx="1483.4" cy="25.2" r="1.5"/><circle cx="1483.4" cy="30.4" r="1.5"/></g>
<path d="M1525 29.6H1536" stroke="#707070" stroke-width="1.4" fill="none"/>
<rect x="1559" y="20.3" width="9.8" height="9.2" stroke="#707070" stroke-width="1.5" fill="none"/>
<path d="M1592.5 19.8L1602.8 30M1602.8 19.8L1592.5 30" stroke="#787878" stroke-width="1.3" fill="none"/>
<g transform="translate(1457.6 73.5)"><circle r="9.9" fill="none" stroke="#fff" stroke-width="1.6"/><path fill="#fff" d="M0-10.6A10.6 10.6 0 0 0 0 10.6Z"/></g>
<g transform="translate(1507.6 73.55)"><path d="M-2.16 -6.66L-1.84 -9.12L1.84 -9.12L2.16 -6.66L4.68 -5.2L6.98 -6.15L8.81 -2.97L6.85 -1.46L6.85 1.46L8.81 2.97L6.98 6.15L4.68 5.2L2.16 6.66L1.84 9.12L-1.84 9.12L-2.16 6.66L-4.68 5.2L-6.98 6.15L-8.81 2.97L-6.85 1.46L-6.85 -1.46L-8.81 -2.97L-6.98 -6.15L-4.68 -5.2Z" fill="#fff" stroke="#fff" stroke-width="2.2" stroke-linejoin="round"/><circle r="3.2" fill="#212121"/></g>
<g transform="translate(1561.5 73.4)"><clipPath id="av"><circle r="15.6"/></clipPath><g clip-path="url(#av)"><circle r="15.6" fill="#ededf1"/><path d="M-16 12.2L-11.8 10.4L-5.7 8.7L-6 16H-16Z" fill="#1f202b"/><path d="M6.6 5.6L13.7 8.5L16 10V16H3L3.4 14Z" fill="#1f202b"/><path d="M-5.8 8.8L-4.6 6L6.7 5.5L3.3 15.7H-6.2Z" fill="#f3f3f7"/><path d="M-4.2 6.8L-.6 7.8L-1.5 11.3L-3.4 12.4Z" fill="#e3b59b"/><ellipse cx=".4" cy="-2" rx="6.3" ry="7.7" fill="#cfa189"/><ellipse cx="-1" cy="-1.5" rx="3.6" ry="4" fill="#d9ae96" opacity=".7"/><path d="M-6-2.3Q-7.2-9-3-11.4Q0-12.9 3.6-11.9Q7.6-10.3 7.8-5.4L7.5-2.3Q6.6-3.4 6-6Q3-8.7-1-8.5Q-4.5-8.4-5.3-5.5Z" fill="#2b2320"/><path d="M-5 2.4Q-4.6 6.3-1.2 7.3Q2.2 7.8 4.8 5.6Q6 4 6.1 1.8Q4.4 4.6 2.4 4.3Q.3 3.3-1.4 4.3Q-3.6 4.7-5 2.4Z" fill="#2a2220"/><path d="M-3.7 1.6Q-1-.1 1.9 1.1Q3 1.6 3.3 2.5Q.5 1.3-1 1.6Q-2.5 1.7-3.9 2.7Z" fill="#3c2a24"/><ellipse cx="-2.9" cy="-3.6" rx="1.4" ry=".7" fill="#7d6052" opacity=".75"/><ellipse cx="2.3" cy="-3.9" rx="1.4" ry=".7" fill="#7d6052" opacity=".75"/></g></g>
<g><rect x="279.9" y="325.3" width="25.2" height="18.6" rx="2.3" fill="#c9c9c9"/><path d="M283.7 338.5V331.1L287.5 335.8L291.3 331.1V338.5" fill="none" stroke="#1b1b1b" stroke-width="1.6" stroke-linejoin="miter"/><path d="M297.4 330.2V338M294.6 335.4L297.4 338.4L300.2 335.4" fill="none" stroke="#1b1b1b" stroke-width="1.6"/><g stroke="#121212" stroke-width="4.6" stroke-linecap="round" fill="#121212"><path d="M306.3 336.8L298.9 341.1L306.3 345.3"/><circle cx="306.3" cy="336.8" r="2.2"/><circle cx="298.9" cy="341.1" r="2.2"/><circle cx="306.3" cy="345.3" r="2.2"/></g><path d="M306.3 336.8L298.9 341.1L306.3 345.3" fill="none" stroke="#fff" stroke-width="1.3"/><g fill="#fff"><circle cx="306.3" cy="336.8" r="2.2"/><circle cx="298.9" cy="341.1" r="2.2"/><circle cx="306.3" cy="345.3" r="2.2"/></g></g>
<g><rect x="279.9" y="358.8" width="26.1" height="26.3" rx="4.6" fill="#fff"/><g fill="#6965db"><path d="M283.4 363.2L289.3 364.6L291.3 367.4L287.6 371.2L284.6 368.9Z"/><path d="M297 373L303 379L300.2 381.9L294.1 375.9Z"/><path d="M283.7 378.2L296.4 365.2Q297 364.6 297.8 364.4L302.5 363L301.7 367.9Q301.6 368.7 301 369.3L287.8 382.3Z"/></g><circle cx="298.1" cy="367.1" r=".9" fill="#fff"/></g>
<g stroke="#121212" fill="none"><path d="M296.8 407V418.3" stroke-width="1.5"/><rect x="295.3" y="403.3" width="3.1" height="4" stroke-width="1.3" fill="#f8a724"/><path d="M294.9 409.6H296.8M294.9 412.3H296.8M294.9 415H296.8M296.8 410.9H298.6M296.8 413.6H298.6M296.8 416.3H298.6" stroke-width="1.2"/></g>
<circle cx="293.5" cy="447.6" r="8.75" fill="#a0a8dd"/><path d="M290.2 447.7L292.5 449.9L296.9 445.3" fill="none" stroke="#2a2b3c" stroke-width="1.35" stroke-linecap="round" stroke-linejoin="round"/></svg>
</body>
</html>
